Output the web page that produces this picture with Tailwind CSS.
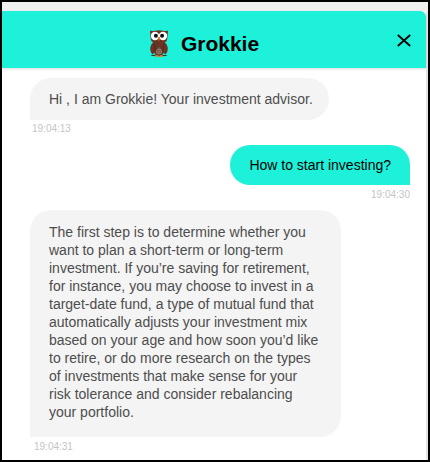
<!DOCTYPE html>
<html lang="en">
<head>
<meta charset="utf-8">
<meta name="viewport" content="width=device-width, initial-scale=1">
<title>Grokkie</title>
<script src="https://cdn.jsdelivr.net/npm/@tailwindcss/browser@4"></script>
</head>
<body class="font-['Liberation_Sans',Arial,sans-serif]">
<div class="flex min-h-screen flex-col border-2 border-black bg-[#f0f0f0] pt-[9px]">
  <div class="flex grow flex-col border-r-2 border-[#e4e4e4] bg-white">
    <header class="grid h-[57px] grid-cols-[1fr_auto_1fr] items-center rounded-tr-md bg-[#1ef1da] shadow-[0_1px_3px_rgba(0,0,0,0.15)]">
      <span></span>
      <div class="flex items-center gap-3 pt-2 pr-5">
        <svg class="h-7 w-5" viewBox="0 0 20 28" aria-hidden="true">
          <ellipse cx="10" cy="25.6" rx="8.5" ry="0.7" fill="#17382f"/>
          <path d="M1 .4Q4 1.5 6 .8Q10-.5 14 .8Q16 1.5 19 .4L18.4 8Q18.4 11 15.8 12.5Q18.8 15 18.8 19Q18.8 22.5 16.5 24.5Q15.4 24 14.8 22.5L13.5 25.5H6.5L5.2 22.5Q4.6 24 3.5 24.5Q1.2 22.5 1.2 19Q1.2 15 4.2 12.5Q1.6 11 1.6 8Z" fill="#6b3324"/>
          <path d="M4.8 14Q6.5 17 6 22M15.2 14Q13.5 17 14 22" fill="none" stroke="#4c2118" stroke-width=".8"/>
          <circle cx="6" cy="6" r="4.2" fill="#fff"/>
          <circle cx="14" cy="6" r="4.2" fill="#fff"/>
          <circle cx="6.9" cy="5.8" r="2" fill="#111"/>
          <circle cx="13.1" cy="5.8" r="2" fill="#111"/>
          <path d="M8.7 7.2Q10 6.2 11.3 7.2L10 11.5Z" fill="#ef7d22"/>
          <path d="M10 17L6.2 25M10 17L13.8 25" stroke="#42665a" stroke-width="1"/>
          <circle cx="10" cy="21.5" r="2.4" fill="#6b3324" stroke="#9a9078" stroke-width="1"/>
          <path d="M8.5 21.5H11.5M10 20V23" stroke="#9a9078" stroke-width=".7"/>
          <path d="M6.2 25.2H9.4V26.8Q7.8 27.7 6.2 26.8ZM10.6 25.2H13.8V26.8Q12.2 27.7 10.6 26.8Z" fill="#ef8a25"/>
        </svg>
        <h1 class="text-[21px] leading-6 font-bold text-black">Grokkie</h1>
      </div>
      <button type="button" aria-label="Close" class="mr-3 justify-self-end">
        <svg class="h-5 w-5" viewBox="0 0 20 20" fill="none" stroke="#000" stroke-width="1.8"><path d="M3.8 5L16.2 16M16.2 5L3.8 16"/></svg>
      </button>
    </header>
    <main class="flex flex-col pt-[10px] pr-4 pl-7 text-[14px] leading-[18px] text-[#4d4d4d]">
      <div class="flex flex-col items-start">
        <p class="rounded-[21px] rounded-bl-none bg-[#f4f4f4] py-3 pr-4 pl-[19px]">Hi , I am Grokkie! Your investment advisor.</p>
        <time class="mt-0.5 ml-0.5 text-[10px] leading-[14px] text-[#c4c4c4]">19:04:13</time>
      </div>
      <div class="mt-[9px] flex flex-col items-end">
        <p class="rounded-[20px] rounded-br-none bg-[#1ef1da] px-[19px] py-[11px] text-black">How to start investing?</p>
        <time class="mt-[3px] text-[10px] leading-[14px] text-[#c4c4c4]">19:04:30</time>
      </div>
      <div class="mt-2 flex flex-col items-start">
        <p class="rounded-[21px] rounded-bl-none bg-[#f4f4f4] pt-[13px] pr-[23px] pb-4 pl-[19px]">The first step is to determine whether you<br>want to plan a short-term or long-term<br>investment. If you’re saving for retirement,<br>for instance, you may choose to invest in a<br>target-date fund, a type of mutual fund that<br>automatically adjusts your investment mix<br>based on your age and how soon you’d like<br>to retire, or do more research on the types<br>of investments that make sense for your<br>risk tolerance and consider rebalancing<br>your portfolio.</p>
        <time class="mt-[3px] ml-1 text-[10px] leading-[14px] text-[#c4c4c4]">19:04:31</time>
      </div>
    </main>
  </div>
</div>
</body>
</html>
